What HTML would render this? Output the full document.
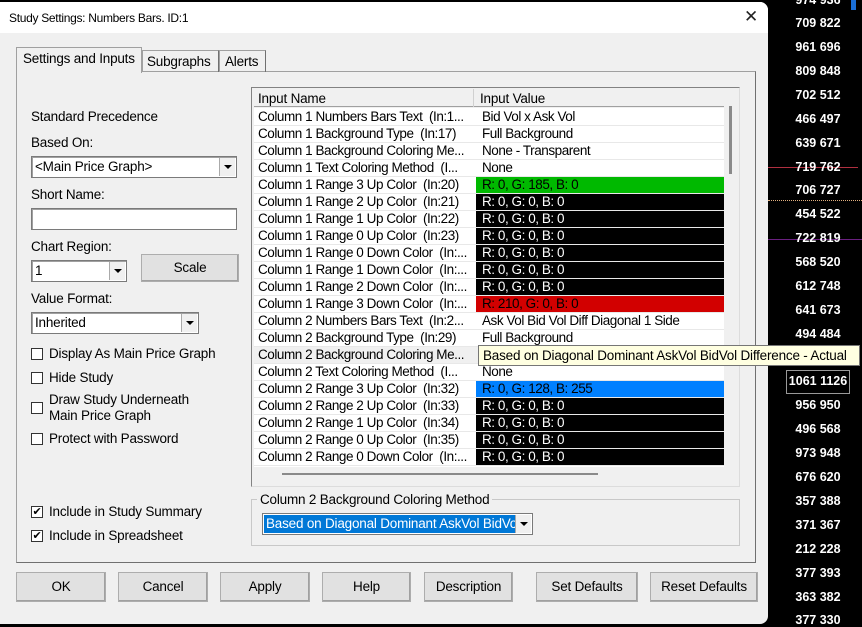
<!DOCTYPE html>
<html><head><meta charset="utf-8"><style>
*{margin:0;padding:0;box-sizing:border-box}
body{width:862px;height:626px;background:#000;position:relative;overflow:hidden;font-family:"Liberation Sans",Arial,sans-serif;font-size:13px;color:#000;letter-spacing:-0.2px}
.a{position:absolute}
.dlg{left:0;top:2px;width:768px;height:622px;background:#f0f0f0;border-radius:0 8px 8px 0;overflow:hidden}
.title{left:0;top:0;width:768px;height:31px;background:#fff}
.btn{position:absolute;top:570px;height:30px;border:1px solid #adadad;background:#e1e1e1;text-align:center;line-height:28px;font-size:13.5px;box-shadow:inset -1px -1px 0 #a0a0a0}
.lbl{position:absolute;font-size:13.5px;white-space:nowrap}
.cb{position:absolute;width:12px;height:12px;border:1px solid #333;background:#fff;font-size:11px;line-height:10px;text-align:center}
.sel{position:absolute;height:22px;background:#fff;border:1px solid #7a7a7a;box-shadow:inset 1px 1px 0 #a0a0a0;font-size:13.5px;line-height:20px;padding-left:3px}
.dd{position:absolute;right:1px;top:1px;width:16px;height:18px;background:#f0f0f0;border-left:1px solid #aaa}
.dd:after{content:"";position:absolute;left:4px;top:7px;border-left:4px solid transparent;border-right:4px solid transparent;border-top:4px solid #000}
.row{position:absolute;left:2px;width:470px;height:17px;border-bottom:1px solid #e8e8e8;font-size:13.5px;line-height:16px;white-space:nowrap;letter-spacing:-0.45px}
.row .n{position:absolute;left:4px;width:216px;overflow:hidden}
.row .v{position:absolute;left:222px;width:248px;padding-left:6px;height:16px;overflow:hidden}
.num{position:absolute;left:780px;width:76px;text-align:center;color:#fff;font-weight:bold;font-size:12.5px;letter-spacing:0}
</style></head><body>
<div class="a" style="left:851px;top:0;width:5px;height:10px;background:#1a6fd8"></div>
<div class="a" style="left:768px;top:167px;width:90px;height:1px;background:#b03040"></div>
<div class="a" style="left:768px;top:200px;width:94px;border-top:1px dotted #e0b080"></div>
<div class="a" style="left:768px;top:239px;width:94px;height:1px;background:#6a2080"></div>
<div class="a" style="left:786px;top:370px;width:64px;height:24px;border:1px solid #999"></div>

<div class="num" style="top:-7px">974 936</div>
<div class="num" style="top:16px">709 822</div>
<div class="num" style="top:40px">961 696</div>
<div class="num" style="top:64px">809 848</div>
<div class="num" style="top:88px">702 512</div>
<div class="num" style="top:112px">466 497</div>
<div class="num" style="top:136px">639 671</div>
<div class="num" style="top:160px">719 762</div>
<div class="num" style="top:183px">706 727</div>
<div class="num" style="top:207px">454 522</div>
<div class="num" style="top:231px">722 819</div>
<div class="num" style="top:255px">568 520</div>
<div class="num" style="top:279px">612 748</div>
<div class="num" style="top:303px">641 673</div>
<div class="num" style="top:327px">494 484</div>
<div class="num" style="top:374px">1061 1126</div>
<div class="num" style="top:398px">956 950</div>
<div class="num" style="top:422px">496 568</div>
<div class="num" style="top:446px">973 948</div>
<div class="num" style="top:470px">676 620</div>
<div class="num" style="top:494px">357 388</div>
<div class="num" style="top:518px">371 367</div>
<div class="num" style="top:542px">212 228</div>
<div class="num" style="top:566px">377 393</div>
<div class="num" style="top:590px">363 382</div>
<div class="num" style="top:613px">377 330</div>

<div class="a dlg">
<div class="a title"></div>
<div class="lbl" style="left:9px;top:9px;font-size:12px;letter-spacing:-0.3px">Study Settings: Numbers Bars. ID:1</div>
<div class="lbl" style="left:744px;top:5px;font-size:17px;font-weight:normal;color:#222">✕</div>

<div class="a" style="left:16px;top:69px;width:740px;height:492px;border:1px solid #a0a0a0;border-right-color:#707070;border-bottom-color:#707070"></div>
<div class="a" style="left:16px;top:45px;width:126px;height:26px;background:#f0f0f0;border:1px solid #a0a0a0;border-bottom:none"></div>
<div class="lbl" style="left:23px;top:49px">Settings and Inputs</div>
<div class="a" style="left:142px;top:48px;width:77px;height:22px;border:1px solid #a0a0a0;border-bottom:none;border-right-color:#707070"></div>
<div class="lbl" style="left:147px;top:52px">Subgraphs</div>
<div class="a" style="left:219px;top:48px;width:47px;height:22px;border:1px solid #a0a0a0;border-bottom:none;border-right-color:#707070"></div>
<div class="lbl" style="left:225px;top:52px">Alerts</div>

<div class="lbl" style="left:31px;top:107px">Standard Precedence</div>
<div class="lbl" style="left:31px;top:133px">Based On:</div>
<div class="sel" style="left:31px;top:154px;width:206px">&lt;Main Price Graph&gt;<div class="dd"></div></div>
<div class="lbl" style="left:31px;top:185px">Short Name:</div>
<div class="sel" style="left:31px;top:206px;width:206px"></div>
<div class="lbl" style="left:31px;top:237px">Chart Region:</div>
<div class="sel" style="left:31px;top:258px;width:96px">1<div class="dd"></div></div>
<div class="btn" style="left:141px;top:252px;width:98px;height:28px;line-height:26px">Scale</div>
<div class="lbl" style="left:31px;top:289px">Value Format:</div>
<div class="sel" style="left:31px;top:310px;width:168px">Inherited<div class="dd"></div></div>
<div class="cb" style="left:31px;top:346px"></div><div class="lbl" style="left:49px;top:344px">Display As Main Price Graph</div>
<div class="cb" style="left:31px;top:370px"></div><div class="lbl" style="left:49px;top:368px">Hide Study</div>
<div class="cb" style="left:31px;top:400px"></div><div class="lbl" style="left:49px;top:390px;line-height:16px">Draw Study Underneath<br>Main Price Graph</div>
<div class="cb" style="left:31px;top:431px"></div><div class="lbl" style="left:49px;top:429px">Protect with Password</div>
<div class="cb" style="left:31px;top:504px">✔</div><div class="lbl" style="left:49px;top:502px">Include in Study Summary</div>
<div class="cb" style="left:31px;top:528px">✔</div><div class="lbl" style="left:49px;top:526px">Include in Spreadsheet</div>

<div class="a" style="left:251px;top:85px;width:489px;height:400px;background:#f0f0f0;border:1px solid #828282;border-right-color:#dcdcdc;border-bottom-color:#dcdcdc">
 <div class="a" style="left:2px;top:1px;width:470px;height:18px;background:#f0f0f0;border-bottom:1px solid #a0a0a0"></div>
 <div class="a" style="left:221px;top:1px;width:1px;height:18px;background:#d0d0d0"></div>
 <div class="lbl" style="left:6px;top:3px">Input Name</div>
 <div class="lbl" style="left:228px;top:3px">Input Value</div>
 <div class="a" style="left:2px;top:20px;width:470px;height:359px;background:#fff"></div>
 <div class="a" style="left:477px;top:18px;width:3px;height:68px;background:#8a8a8a"></div>
 <div class="a" style="left:30px;top:385px;width:316px;height:2px;background:#8a8a8a"></div>
 <div class="row" style="top:21px"><span class="n">Column 1 Numbers Bars Text &nbsp;(In:1...</span><span class="v">Bid Vol x Ask Vol</span></div>
 <div class="row" style="top:38px"><span class="n">Column 1 Background Type &nbsp;(In:17)</span><span class="v">Full Background</span></div>
 <div class="row" style="top:55px"><span class="n">Column 1 Background Coloring Me...</span><span class="v">None - Transparent</span></div>
 <div class="row" style="top:72px"><span class="n">Column 1 Text Coloring Method &nbsp;(I...</span><span class="v">None</span></div>
 <div class="row" style="top:89px"><span class="n">Column 1 Range 3 Up Color &nbsp;(In:20)</span><span class="v" style="background:#00b900">R: 0, G: 185, B: 0</span></div>
 <div class="row" style="top:106px"><span class="n">Column 1 Range 2 Up Color &nbsp;(In:21)</span><span class="v" style="background:#000;color:#fff">R: 0, G: 0, B: 0</span></div>
 <div class="row" style="top:123px"><span class="n">Column 1 Range 1 Up Color &nbsp;(In:22)</span><span class="v" style="background:#000;color:#fff">R: 0, G: 0, B: 0</span></div>
 <div class="row" style="top:140px"><span class="n">Column 1 Range 0 Up Color &nbsp;(In:23)</span><span class="v" style="background:#000;color:#fff">R: 0, G: 0, B: 0</span></div>
 <div class="row" style="top:157px"><span class="n">Column 1 Range 0 Down Color &nbsp;(In:...</span><span class="v" style="background:#000;color:#fff">R: 0, G: 0, B: 0</span></div>
 <div class="row" style="top:174px"><span class="n">Column 1 Range 1 Down Color &nbsp;(In:...</span><span class="v" style="background:#000;color:#fff">R: 0, G: 0, B: 0</span></div>
 <div class="row" style="top:191px"><span class="n">Column 1 Range 2 Down Color &nbsp;(In:...</span><span class="v" style="background:#000;color:#fff">R: 0, G: 0, B: 0</span></div>
 <div class="row" style="top:208px"><span class="n">Column 1 Range 3 Down Color &nbsp;(In:...</span><span class="v" style="background:#d20000;color:#000">R: 210, G: 0, B: 0</span></div>
 <div class="row" style="top:225px"><span class="n">Column 2 Numbers Bars Text &nbsp;(In:2...</span><span class="v">Ask Vol Bid Vol Diff Diagonal 1 Side</span></div>
 <div class="row" style="top:242px"><span class="n">Column 2 Background Type &nbsp;(In:29)</span><span class="v">Full Background</span></div>
 <div class="row" style="top:259px;background:#f0f0f0"><span class="n">Column 2 Background Coloring Me...</span><span class="v"></span></div>
 <div class="row" style="top:276px"><span class="n">Column 2 Text Coloring Method &nbsp;(I...</span><span class="v">None</span></div>
 <div class="row" style="top:293px"><span class="n">Column 2 Range 3 Up Color &nbsp;(In:32)</span><span class="v" style="background:#0080ff">R: 0, G: 128, B: 255</span></div>
 <div class="row" style="top:310px"><span class="n">Column 2 Range 2 Up Color &nbsp;(In:33)</span><span class="v" style="background:#000;color:#fff">R: 0, G: 0, B: 0</span></div>
 <div class="row" style="top:327px"><span class="n">Column 2 Range 1 Up Color &nbsp;(In:34)</span><span class="v" style="background:#000;color:#fff">R: 0, G: 0, B: 0</span></div>
 <div class="row" style="top:344px"><span class="n">Column 2 Range 0 Up Color &nbsp;(In:35)</span><span class="v" style="background:#000;color:#fff">R: 0, G: 0, B: 0</span></div>
 <div class="row" style="top:361px"><span class="n">Column 2 Range 0 Down Color &nbsp;(In:...</span><span class="v" style="background:#000;color:#fff">R: 0, G: 0, B: 0</span></div>
</div>

<div class="a" style="left:251px;top:497px;width:489px;height:47px;border:1px solid #c8c8c8"></div>
<div class="lbl" style="left:257px;top:490px;background:#f0f0f0;padding:0 3px">Column 2 Background Coloring Method</div>
<div class="a" style="left:262px;top:511px;width:271px;height:22px;background:#fff;border:1px solid #7a7a7a">
 <div class="a" style="left:1px;top:1px;width:251px;height:18px;background:#0078d7;color:#fff;font-size:13.5px;line-height:18px;white-space:nowrap;overflow:hidden;padding-left:2px;letter-spacing:-0.2px">Based on Diagonal Dominant AskVol BidVol</div>
 <div class="dd"></div>
</div>

<div class="btn" style="left:16px;width:90px">OK</div>
<div class="btn" style="left:118px;width:90px">Cancel</div>
<div class="btn" style="left:220px;width:90px">Apply</div>
<div class="btn" style="left:322px;width:89px">Help</div>
<div class="btn" style="left:424px;width:89px">Description</div>
<div class="btn" style="left:536px;width:102px">Set Defaults</div>
<div class="btn" style="left:650px;width:108px">Reset Defaults</div>
</div>

<div class="a" style="left:478px;top:345px;width:382px;height:21px;background:#ffffe1;border:1px solid #767676;font-size:13.5px;line-height:19px;padding-left:4px;white-space:nowrap;overflow:hidden;letter-spacing:-0.2px">Based on Diagonal Dominant AskVol BidVol Difference - Actual</div>
</body></html>
